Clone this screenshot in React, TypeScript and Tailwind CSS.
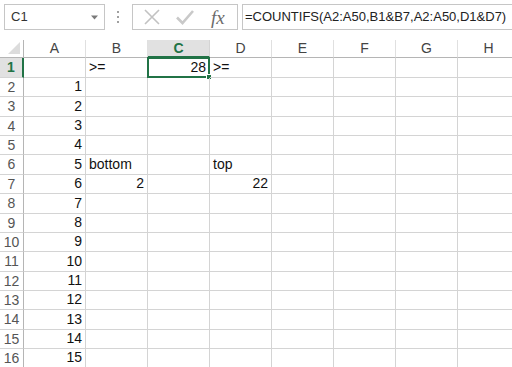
import React from 'react'

const COLS = ['A', 'B', 'C', 'D', 'E', 'F', 'G', 'H']

// row heights for rows 1..16 (screenshot was scaled, so 19/20 alternate)
const ROW_H = [20, 19, 20, 19, 19, 20, 19, 20, 19, 19, 20, 19, 19, 20, 19, 19]

type Cell = { v: string; right?: boolean }

const DATA: Record<string, Cell> = {
  B1: { v: '>=' },
  C1: { v: '28', right: true },
  D1: { v: '>=' },
  B6: { v: 'bottom' },
  D6: { v: 'top' },
  B7: { v: '2', right: true },
  D7: { v: '22', right: true },
}
for (let i = 2; i <= 16; i++) DATA[`A${i}`] = { v: String(i - 1), right: true }

function NameBox() {
  return (
    <div className="relative flex h-[26px] w-[101px] items-center border border-[#c6c6c6] bg-white pl-[6px] text-[13px] text-[#333]">
      C1
      {/* dropdown caret */}
      <svg className="absolute right-[6px] top-[10px]" width="7" height="5" viewBox="0 0 7 5">
        <path d="M0 0.5 H7 L3.5 4.5 Z" fill="#7a7a7a" />
      </svg>
    </div>
  )
}

function FormulaButtons() {
  return (
    <div className="flex h-[26px] w-[106px] items-center border border-[#c6c6c6] bg-white">
      <svg className="ml-[10px]" width="18" height="18" viewBox="0 0 18 18">
        <path d="M2 2 L16 16 M16 2 L2 16" stroke="#c2c2c2" strokeWidth="1.6" />
      </svg>
      <svg className="ml-[14px]" width="20" height="18" viewBox="0 0 20 18">
        <path d="M2 9.5 L7.5 15 L18 3" stroke="#c9c9c9" strokeWidth="2.6" fill="none" />
      </svg>
      <span className="ml-[16px] font-['Liberation_Serif',serif] text-[19px] italic leading-none text-[#6b6b6b]">
        fx
      </span>
    </div>
  )
}

function Toolbar() {
  return (
    <div className="flex h-[40px] items-start gap-0 pl-[4px] pt-[4px]">
      <NameBox />
      <div className="ml-[12px] mt-[7px] flex h-[12px] flex-col justify-between">
        <span className="h-[2px] w-[2px] bg-[#a0a0a0]" />
        <span className="h-[2px] w-[2px] bg-[#a0a0a0]" />
        <span className="h-[2px] w-[2px] bg-[#a0a0a0]" />
      </div>
      <div className="ml-[13px]">
        <FormulaButtons />
      </div>
      <div className="ml-[4px] flex h-[26px] flex-1 items-center border border-r-0 border-[#c6c6c6] bg-white pl-[2px] text-[13px] text-[#222]">
        =COUNTIFS(A2:A50,B1&amp;B7,A2:A50,D1&amp;D7)
      </div>
    </div>
  )
}

export default function App() {
  return (
    <div className="h-[367px] w-[512px] overflow-hidden bg-white font-['Liberation_Sans',Arial,sans-serif]">
      <Toolbar />
      <div
        className="grid w-[520px] grid-cols-[24px_repeat(8,62px)]"
        style={{ gridTemplateRows: `18px ${ROW_H.map((h) => h + 'px').join(' ')}` }}
      >
        {/* corner */}
        <div className="relative border-b border-r border-[#b5b5b5] bg-white">
          <svg className="absolute bottom-[3px] right-[3px]" width="12" height="12" viewBox="0 0 12 12">
            <path d="M12 0 V12 H0 Z" fill="#dcdcdc" />
          </svg>
        </div>
        {COLS.map((c) =>
          c === 'C' ? (
            <div
              key={c}
              className="flex items-center justify-center border-b-2 border-r border-b-[#217346] border-r-[#d4d4d4] bg-[#e1e1e1] text-[14px] font-bold text-[#217346]"
            >
              {c}
            </div>
          ) : (
            <div
              key={c}
              className="flex items-center justify-center border-b border-r border-b-[#b5b5b5] border-r-[#e0e0e0] bg-white text-[14px] text-[#444]"
            >
              {c}
            </div>
          )
        )}

        {ROW_H.map((_, i) => {
          const r = i + 1
          return (
            <React.Fragment key={r}>
              {r === 1 ? (
                <div className="flex items-center justify-center border-b border-r-2 border-b-[#d4d4d4] border-r-[#217346] bg-[#e1e1e1] text-[14px] font-bold text-[#217346]">
                  {r}
                </div>
              ) : (
                <div className="flex items-center justify-center border-b border-r border-b-[#d4d4d4] border-r-[#b5b5b5] bg-white text-[14px] text-[#555]">
                  {r}
                </div>
              )}
              {COLS.map((c) => {
                const id = `${c}${r}`
                const cell = DATA[id]
                const selected = id === 'C1'
                return (
                  <div
                    key={id}
                    className={
                      'relative flex items-end overflow-visible whitespace-nowrap border-b border-r border-[#d4d4d4] px-[3px] pb-[1px] text-[14px] leading-[17px] text-[#111] ' +
                      (cell?.right ? 'justify-end' : 'justify-start')
                    }
                  >
                    {cell?.v}
                    {selected && (
                      <>
                        <div className="pointer-events-none absolute -left-[1px] -top-[1px] bottom-[-1px] right-[-1px] border-2 border-[#217346]" />
                        <div className="absolute -bottom-[3px] -right-[3px] h-[6px] w-[6px] border border-white bg-[#217346]" />
                      </>
                    )}
                  </div>
                )
              })}
            </React.Fragment>
          )
        })}
      </div>
    </div>
  )
}
